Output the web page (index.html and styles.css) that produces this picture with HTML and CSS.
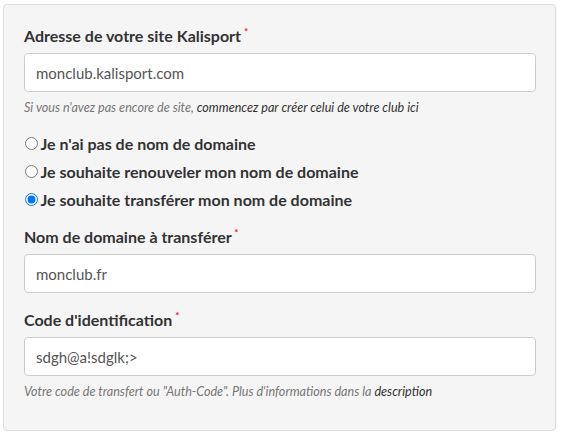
FILE: index.html
```html
<!DOCTYPE html>
<html lang="fr">
<head>
    <meta charset="UTF-8">
    <meta name="viewport" content="width=device-width, initial-scale=1.0">
    <title>Nom de domaine</title>
    <link rel="stylesheet" href="styles.css">
</head>
<body>
    <div class="panel">
        <div class="form-group">
            <label class="field-label" for="site">Adresse de votre site Kalisport <span class="required">*</span></label>
            <input class="field" id="site" type="text" value="monclub.kalisport.com">
            <p class="help">Si vous n'avez pas encore de site, <a href="#">commencez par créer celui de votre club ici</a></p>
        </div>

        <div class="radios">
            <label class="radio"><input type="radio" name="domaine"> Je n'ai pas de nom de domaine</label>
            <label class="radio"><input type="radio" name="domaine"> Je souhaite renouveler mon nom de domaine</label>
            <label class="radio"><input type="radio" name="domaine" checked> Je souhaite transférer mon nom de domaine</label>
        </div>

        <div class="form-group">
            <label class="field-label" for="domain">Nom de domaine à transférer <span class="required">*</span></label>
            <input class="field" id="domain" type="text" value="monclub.fr">
        </div>

        <div class="form-group last">
            <label class="field-label" for="code">Code d'identification <span class="required">*</span></label>
            <input class="field" id="code" type="text" value="sdgh@a!sdglk;>">
            <p class="help">Votre code de transfert ou "Auth-Code". Plus d'informations dans la <a href="#">description</a></p>
        </div>
    </div>
</body>
</html>
```

FILE: styles.css
```css
body {
    font-family: Lato, "Open Sans", sans-serif;
    background-color: #fff;
    color: #333;
    margin: 0;
    padding: 4px 5px 0 3px;
}
.panel {
    background: #f5f5f5;
    border: 1px solid #ddd;
    border-radius: 4px;
    padding: 21px 19px 30px 20px;
    height: 427px;
    box-sizing: border-box;
}
.form-group {
    margin-bottom: 17px;
}
.form-group.last {
    margin-bottom: 0;
}
.field-label {
    display: block;
    font-size: 16px;
    font-weight: bold;
    line-height: 20px;
    margin-bottom: 7px;
}
.required {
    color: #e8202a;
    font-size: 10px;
    vertical-align: top;
    line-height: 10px;
    margin-left: -1px;
}
.field {
    display: block;
    width: 100%;
    height: 39px;
    box-sizing: border-box;
    border: 1px solid #ccc;
    border-radius: 4px;
    background: #fff;
    padding: 0 11px;
    font-family: Lato, sans-serif;
    font-size: 15px;
    color: #555;
}
.help {
    margin: 7px 0 0;
    font-size: 12.6px;
    font-style: italic;
    line-height: 17px;
    color: #777;
}
.help a {
    color: #333;
    text-decoration: none;
}
.radios {
    margin: -4px 0 14px;
}
.radio {
    display: flex;
    align-items: center;
    height: 28px;
    font-size: 16px;
    font-weight: bold;
    white-space: pre;
}
.radio input {
    margin: 0 -1px 0 1px;
    width: 13px;
    height: 13px;
}
```
